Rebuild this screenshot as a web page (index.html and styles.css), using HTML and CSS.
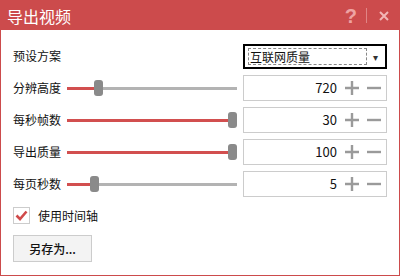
FILE: index.html
```html
<html>
  <head>
    <title>导出视频</title>
    <link rel="stylesheet" href="styles.css">
  </head>
  <body>
    <div class="dialog">
      <div class="title-bar">
        <span class="title-text">导出视频</span>
        <span class="title-help">?</span>
        <span class="title-sep"></span>
        <svg class="title-close" width="10" height="10" viewBox="0 0 10 10">
          <path d="M1 1 L9 9 M9 1 L1 9" stroke="#f2b6b6" stroke-width="2" />
        </svg>
      </div>

      <div class="dialog-content">
        <div class="form-row">
          <label class="row-label">预设方案</label>
          <div class="select-box">
            <span class="select-focus">互联网质量</span>
            <span class="select-arrow">&#9662;</span>
          </div>
        </div>

        <div class="form-row">
          <label class="row-label">分辨高度</label>
          <div class="slider">
            <div class="slider-fill" style="width: 27px"></div>
            <div class="slider-thumb"></div>
            <div class="slider-rest"></div>
          </div>
          <div class="number-box">
            <span class="number-value">720</span>
            <svg class="step-icon" width="14" height="14" viewBox="0 0 14 14"><path d="M0 7 H14 M7 0 V14" /></svg>
            <svg class="step-icon" width="14" height="14" viewBox="0 0 14 14"><path d="M0 7 H14" /></svg>
          </div>
        </div>

        <div class="form-row">
          <label class="row-label">每秒帧数</label>
          <div class="slider">
            <div class="slider-fill" style="width: 161px"></div>
            <div class="slider-thumb"></div>
            <div class="slider-rest"></div>
          </div>
          <div class="number-box">
            <span class="number-value">30</span>
            <svg class="step-icon" width="14" height="14" viewBox="0 0 14 14"><path d="M0 7 H14 M7 0 V14" /></svg>
            <svg class="step-icon" width="14" height="14" viewBox="0 0 14 14"><path d="M0 7 H14" /></svg>
          </div>
        </div>

        <div class="form-row">
          <label class="row-label">导出质量</label>
          <div class="slider">
            <div class="slider-fill" style="width: 161px"></div>
            <div class="slider-thumb"></div>
            <div class="slider-rest"></div>
          </div>
          <div class="number-box">
            <span class="number-value">100</span>
            <svg class="step-icon" width="14" height="14" viewBox="0 0 14 14"><path d="M0 7 H14 M7 0 V14" /></svg>
            <svg class="step-icon" width="14" height="14" viewBox="0 0 14 14"><path d="M0 7 H14" /></svg>
          </div>
        </div>

        <div class="form-row">
          <label class="row-label">每页秒数</label>
          <div class="slider">
            <div class="slider-fill" style="width: 23px"></div>
            <div class="slider-thumb"></div>
            <div class="slider-rest"></div>
          </div>
          <div class="number-box">
            <span class="number-value">5</span>
            <svg class="step-icon" width="14" height="14" viewBox="0 0 14 14"><path d="M0 7 H14 M7 0 V14" /></svg>
            <svg class="step-icon" width="14" height="14" viewBox="0 0 14 14"><path d="M0 7 H14" /></svg>
          </div>
        </div>

        <div class="check-row">
          <span class="check-box">
            <svg width="13" height="11" viewBox="0 0 13 11">
              <path d="M1.5 5.5 L5 9 L11.5 1.5" fill="none" stroke="#d04a4a" stroke-width="2.6" />
            </svg>
          </span>
          <span class="check-label">使用时间轴</span>
        </div>

        <button class="save-btn">另存为...</button>
      </div>
    </div>
  </body>
</html>
```

FILE: styles.css
```css
:root {
  --accent: #cc4b4c;
  --track-red: #d24f4f;
  --track-gray: #b3b3b3;
  --thumb: #8a8a8a;
  --border-light: #cccccc;
  --icon-gray: #9a9a9a;
  --text: #111111;
}
* {
  box-sizing: border-box;
  margin: 0;
  padding: 0;
}
body {
  font-family: "Noto Sans CJK SC", "Liberation Sans", sans-serif;
  font-size: 12px;
  color: var(--text);
  background: white;
}

.dialog {
  width: 400px;
  height: 276px;
  border: 1px solid var(--accent);
  background: white;
}

.title-bar {
  height: 29px;
  background: var(--accent);
  display: flex;
  align-items: center;
  padding-left: 6px;
  padding-right: 10px;
}
.title-text {
  color: white;
  font-size: 16px;
  line-height: 20px;
  flex: 1;
}
.title-help {
  color: #eea3a3;
  font-family: "Liberation Sans", sans-serif;
  font-weight: bold;
  font-size: 20px;
  line-height: 20px;
}
.title-sep {
  width: 1px;
  height: 15px;
  background: #e08585;
  margin: 0 12px 0 9px;
}
.title-close {
  display: block;
}

.dialog-content {
  padding: 13px 12px 0 12px;
}

.form-row {
  display: flex;
  align-items: center;
  height: 26px;
  margin-bottom: 6px;
}
.row-label {
  width: 54px;
  line-height: 16px;
}

.slider {
  width: 170px;
  height: 16px;
  display: flex;
  align-items: center;
  margin-right: 6px;
}
.slider-fill {
  height: 3px;
  background: var(--track-red);
}
.slider-thumb {
  width: 9px;
  height: 16px;
  border-radius: 3px;
  background: var(--thumb);
}
.slider-rest {
  flex: 1;
  height: 3px;
  background: var(--track-gray);
}

.select-box {
  margin-left: auto;
  width: 144px;
  height: 25px;
  border: 2px solid black;
  display: flex;
  align-items: center;
  padding-left: 3px;
}
.select-focus {
  width: 119px;
  height: 17px;
  border: 1px dashed #888;
  line-height: 15px;
  padding-left: 1px;
}
.select-arrow {
  font-size: 10px;
  margin-left: 6px;
  color: #333;
}

.number-box {
  flex: 1;
  height: 26px;
  border: 1px solid var(--border-light);
  display: flex;
  align-items: center;
  justify-content: flex-end;
  padding-right: 5px;
  gap: 8px;
}
.number-value {
  font-size: 13px;
  line-height: 16px;
}
.step-icon {
  display: block;
}
.step-icon path {
  stroke: var(--icon-gray);
  stroke-width: 2.4;
}

.check-row {
  display: flex;
  align-items: center;
  margin-top: 10px;
  gap: 8px;
}
.check-box {
  width: 17px;
  height: 17px;
  border: 1px solid var(--border-light);
  display: flex;
  align-items: center;
  justify-content: center;
}
.check-label {
  line-height: 16px;
}

.save-btn {
  display: block;
  margin-top: 11px;
  width: 79px;
  height: 27px;
  border: 1px solid var(--border-light);
  background: #f3f3f3;
  font-family: "Noto Sans CJK SC", "Liberation Sans", sans-serif;
  font-size: 12px;
  font-weight: 500;
  color: var(--text);
}
```
